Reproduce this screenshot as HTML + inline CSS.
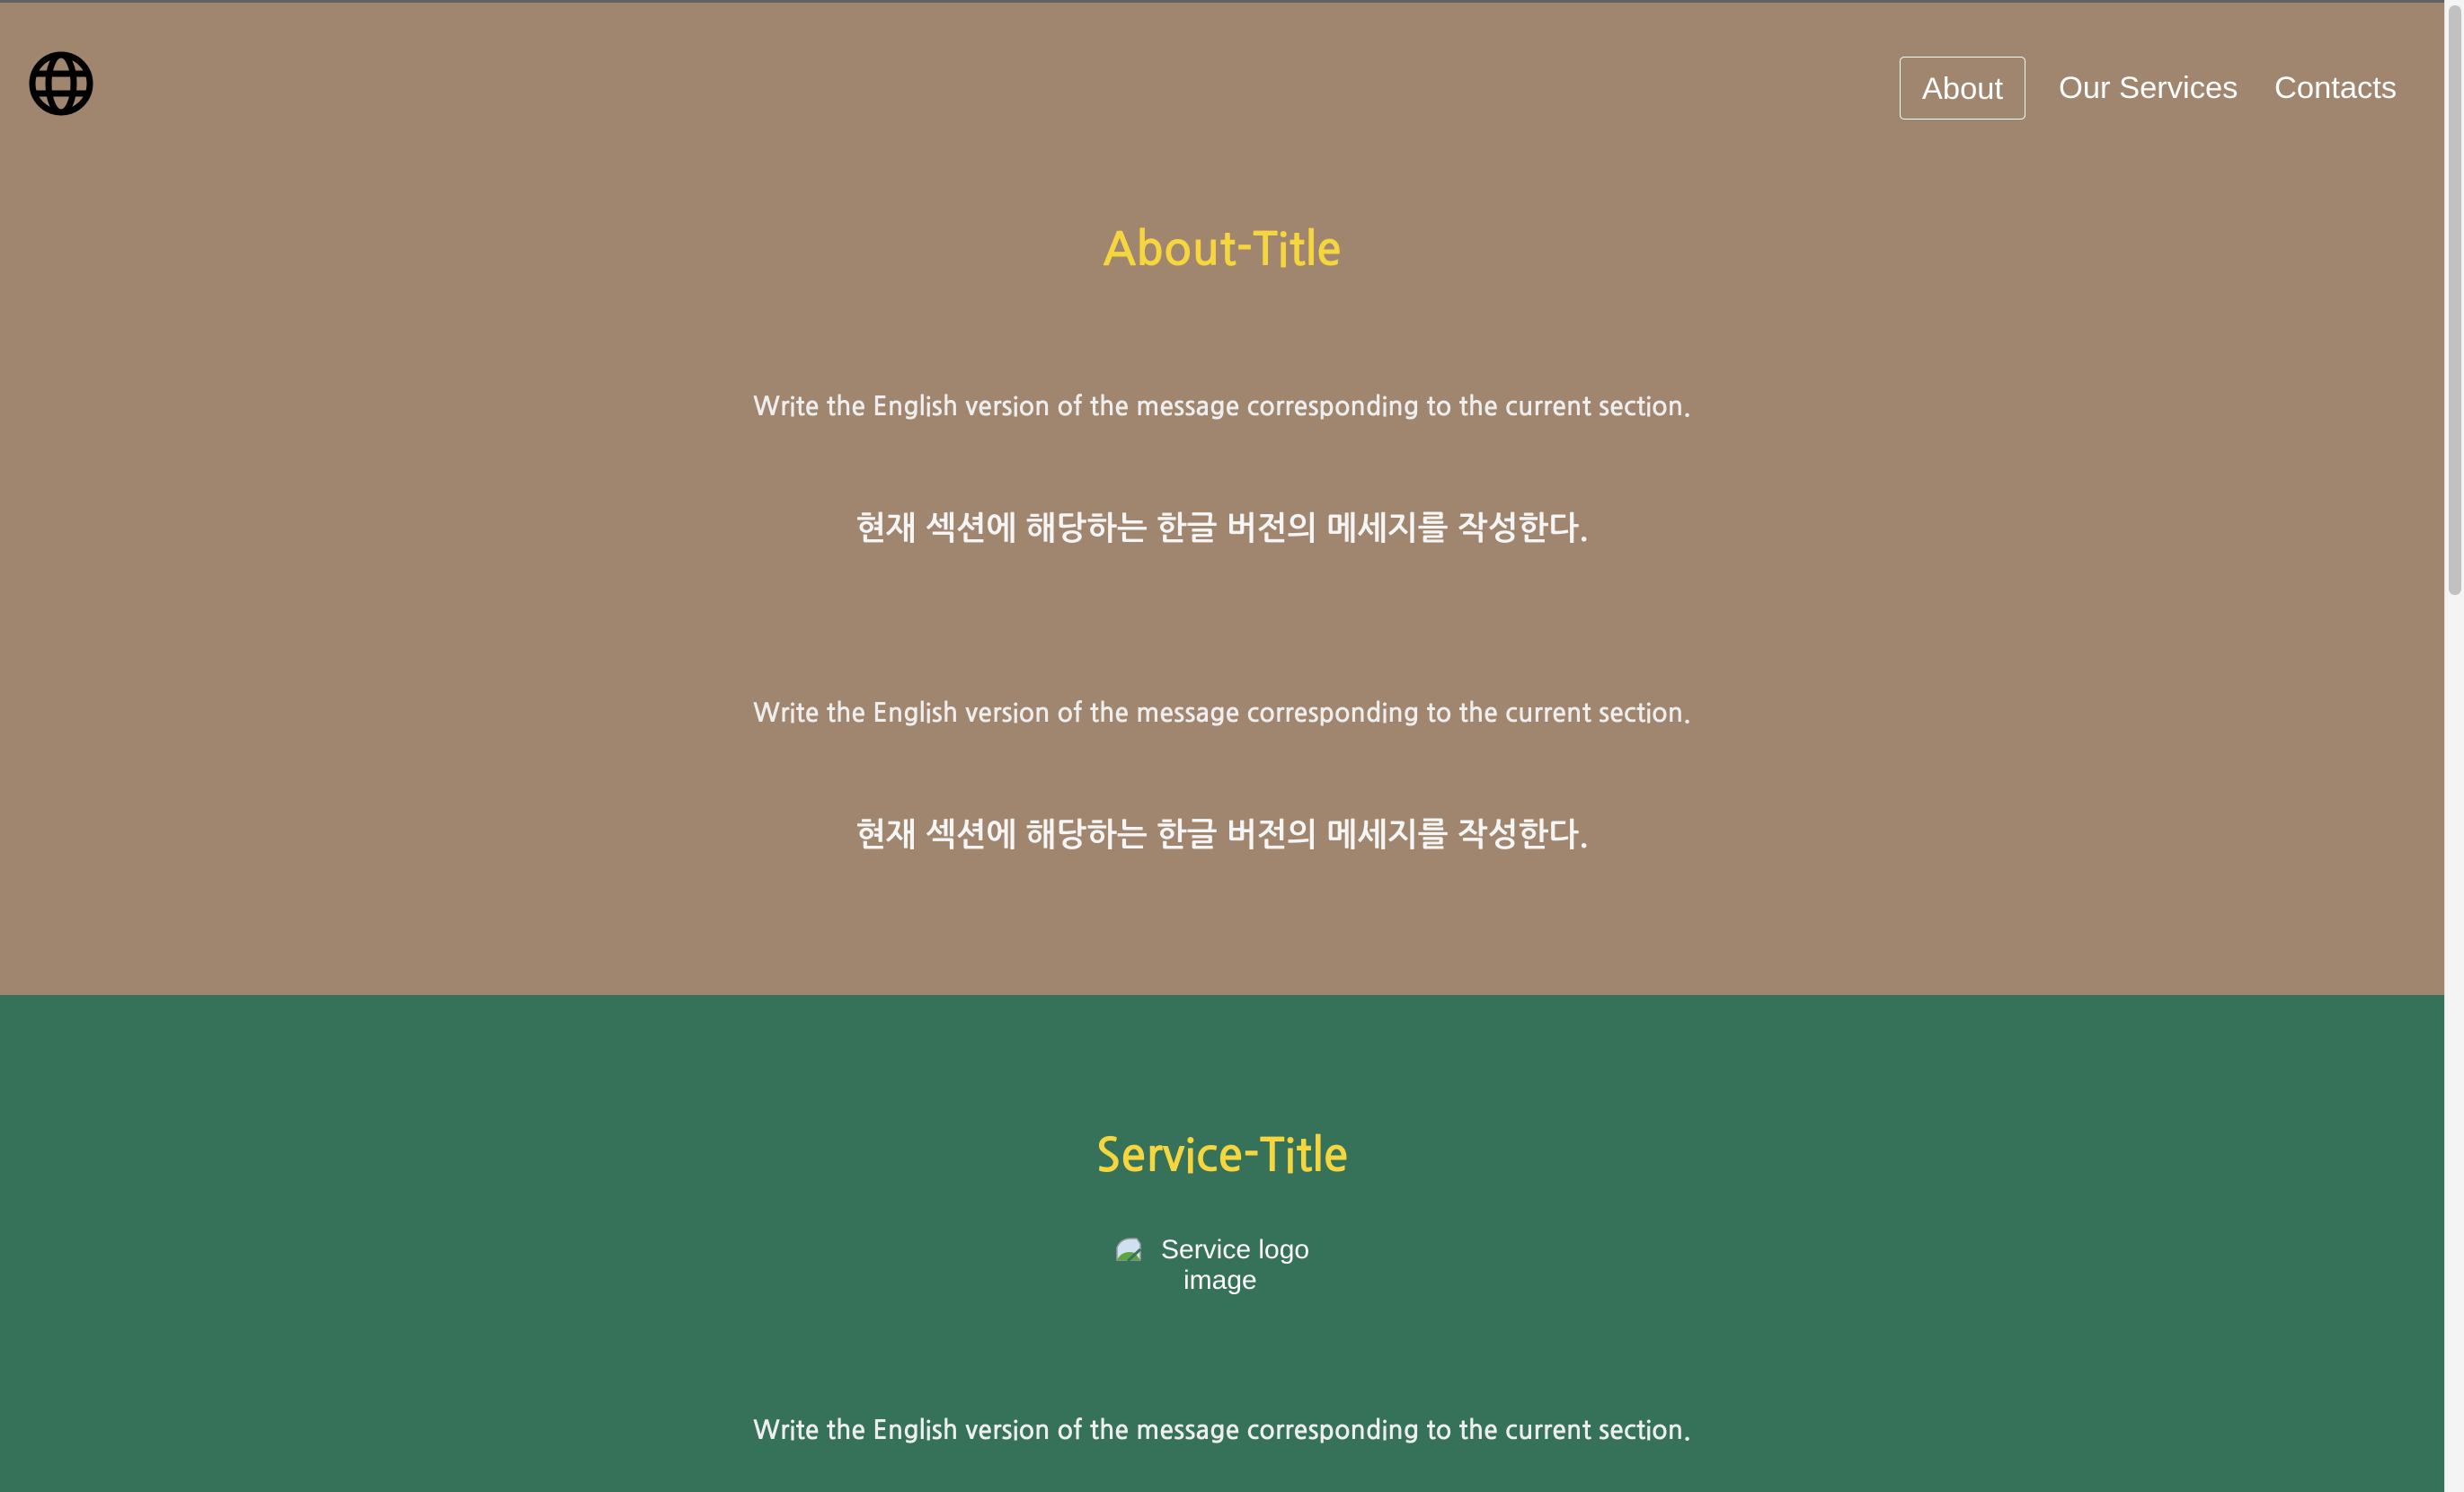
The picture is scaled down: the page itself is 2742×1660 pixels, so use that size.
<!DOCTYPE html>
<html><head><meta charset="utf-8"><style>
html,body{margin:0;padding:0;width:2742px;height:1660px;overflow:hidden;font-family:"NanumGothic","Liberation Sans","Noto Sans CJK KR",sans-serif;}
.brown{position:absolute;left:0;top:0;width:2720px;height:1107px;background:#a0866f;border-top:3px solid #5f6366;box-sizing:border-box}
.green{position:absolute;left:0;top:1107px;width:2720px;height:553px;background:#36725a}
.sb{position:absolute;left:2720px;top:0;width:22px;height:1660px;background:#f4f4f4;border-left:1px solid #e0e0e0;box-sizing:border-box}
.thumb{position:absolute;left:4px;top:6px;width:14px;height:656px;background:#c1c1c1;border-radius:7px}
.t{position:absolute;left:0;width:2720px;text-align:center;line-height:1;white-space:nowrap}
.title{color:#f6d63f;font-weight:bold;font-size:51px}
.en{color:#eeeeee;font-weight:bold;font-size:28.8px}
.ko{color:#f5f5f5;font-weight:bold;font-size:36px}
.nav{position:absolute;top:63px;height:68px;color:#fff;font-size:34.5px;line-height:70px;font-family:"Liberation Sans",sans-serif;}
.lg{position:absolute;color:#fff;font-size:30px;line-height:34px;font-family:'Liberation Sans',sans-serif;white-space:nowrap}
</style></head><body>
<div class="brown"></div>
<div class="green"></div>
<div class="sb"><div class="thumb"></div></div>
<svg style="position:absolute;left:31px;top:56px" width="74" height="74" viewBox="0 0 74 74">
<g fill="none" stroke="#000" stroke-width="7">
<circle cx="37" cy="37" r="32"/>
<ellipse cx="37" cy="37" rx="14" ry="32"/>
<line x1="5" y1="26" x2="69" y2="26"/>
<line x1="5" y1="48" x2="69" y2="48"/>
</g></svg>
<div class="nav" style="left:2114px;width:138px;border:1.5px solid #fff;border-radius:5px;text-align:center">About</div>
<div class="nav" style="left:2291px">Our Services</div>
<div class="nav" style="left:2531px">Contacts</div>
<div class="t title" style="top:252px">About-Title</div>
<div class="t en" style="top:439px">Write the English version of the message corresponding to the current section.</div>
<div class="t ko" style="top:571px">현재 섹션에 해당하는 한글 버전의 메세지를 작성한다.</div>
<div class="t en" style="top:780px">Write the English version of the message corresponding to the current section.</div>
<div class="t ko" style="top:912px">현재 섹션에 해당하는 한글 버전의 메세지를 작성한다.</div>
<div class="t title" style="top:1260px">Service-Title</div>
<svg style="position:absolute;left:1241px;top:1376px" width="30" height="28" viewBox="0 0 30 28">
<path d="M2 26 L2 12 Q6 2 18 2 L24 2 L28 8 L28 26 Z" fill="#cfe0f0" stroke="#999" stroke-width="1.5"/>
<path d="M2 26 Q8 14 22 18 L28 26 Z" fill="#5aa442"/>
<line x1="14" y1="27" x2="28" y2="14" stroke="#36725a" stroke-width="3"/>
</svg>
<div class="lg" style="left:1292px;top:1374px">Service logo</div>
<div class="lg" style="left:1317px;top:1408px">image</div>
<div class="t en" style="top:1578px">Write the English version of the message corresponding to the current section.</div>
</body></html>
